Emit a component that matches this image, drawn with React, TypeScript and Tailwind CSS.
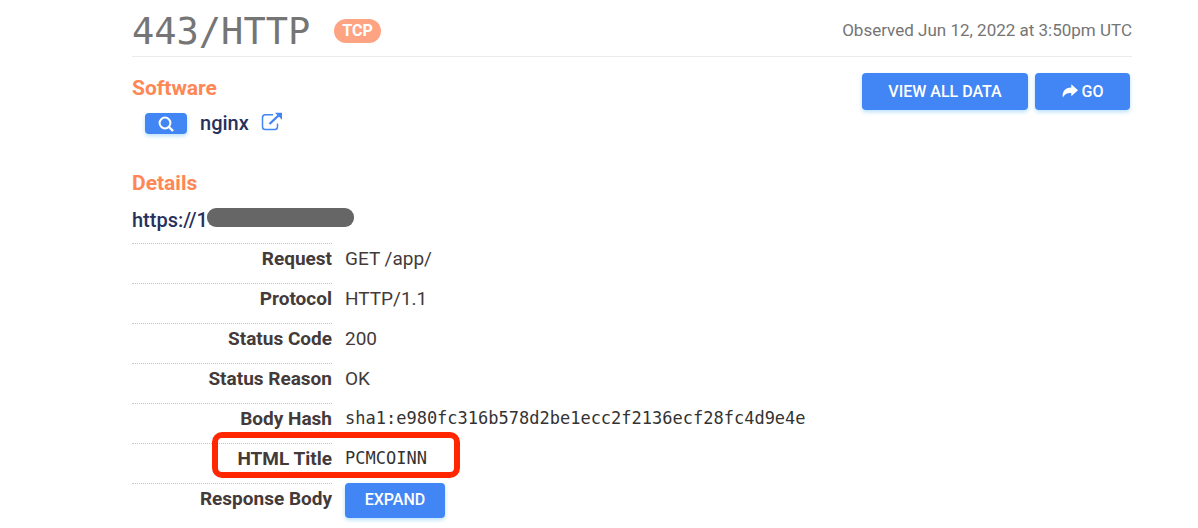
import type { ReactNode } from "react";

const buttonStyle =
  "rounded-[4px] bg-[#4285f4] text-white shadow-[0_2px_4px_#b8e0fa] hover:bg-[#3478ea]";

function SectionTitle({ children }: { children: ReactNode }) {
  return <h3 className="text-[21px] leading-[30px] font-bold text-[#ff8655]">{children}</h3>;
}

function Row({
  label,
  children,
  marked = false,
}: {
  label: string;
  children: ReactNode;
  marked?: boolean;
}) {
  return (
    <div className="relative flex h-10 items-start text-[19px]">
      <dt className="h-full w-[200px] shrink-0 border-t border-dotted border-[#c4c4c4] text-right leading-[30px] font-bold text-[#443a3a]">
        {label}
      </dt>
      <dd className="pl-[13px] leading-8 text-[#443a3a]">{children}</dd>
      {marked && (
        <span className="pointer-events-none absolute -top-[11px] left-20 h-[46px] w-[248px] rounded-[10px] border-[6px] border-[#ff2600]" />
      )}
    </div>
  );
}

function Mono({ children }: { children: ReactNode }) {
  return (
    <code className="block font-['DejaVu_Sans_Mono',monospace] text-[17px] leading-[30px] text-[#333]">
      {children}
    </code>
  );
}

export default function App() {
  return (
    <main className="bg-white pr-[66px] pl-[132px] font-['Roboto',sans-serif]">
      <header className="flex h-[57px] items-center justify-between border-b border-[#ebebeb] pt-1.5">
        <div className="flex items-center gap-6">
          <h2 className="pt-0.5 font-['DejaVu_Sans_Mono',monospace] text-[37px] leading-10 text-[#757575]">
            443/HTTP
          </h2>
          <span className="h-6 rounded-full bg-[#ffa482] px-2 text-[16px] leading-6 font-bold text-white">
            TCP
          </span>
        </div>
        <p className="text-[17px] text-[#757575]">Observed Jun 12, 2022 at 3:50pm UTC</p>
      </header>

      <section className="flex items-start justify-between pt-4 pr-[2px]">
        <div>
          <SectionTitle>Software</SectionTitle>
          <div className="mt-1 flex h-8 items-center pl-[13px]">
            <button
              type="button"
              aria-label="Search"
              className={`flex h-[21px] w-[42px] items-center justify-center pt-0.5 ${buttonStyle}`}
            >
              <svg viewBox="0 0 16 16" className="h-4 w-4" fill="none" stroke="currentColor">
                <circle cx="7" cy="7" r="5.4" strokeWidth="2" />
                <path d="M11 11l4 4" strokeWidth="2.4" />
              </svg>
            </button>
            <span className="ml-[13px] text-[20px] font-medium text-[#28305c]">nginx</span>
            <a href="#nginx" aria-label="Open nginx" className="ml-3 pb-0.5 text-[#4285f4]">
              <svg viewBox="0 0 22 20" className="h-5 w-[22px]" fill="none" stroke="currentColor">
                <path
                  d="M12 2.8H4.3A2.8 2.8 0 0 0 1.5 5.6v9.2A2.8 2.8 0 0 0 4.3 17.6h9.4a2.8 2.8 0 0 0 2.8-2.8V11.5"
                  strokeWidth="1.5"
                />
                <path d="M8.5 12L17.5 3.5" strokeWidth="2.4" />
                <path d="M14 0.8h7v7z" fill="currentColor" stroke="none" />
              </svg>
            </a>
          </div>
        </div>
        <div className="flex gap-[7px]">
          <button type="button" className={`h-[37px] w-[166px] text-[16px] font-medium ${buttonStyle}`}>
            VIEW ALL DATA
          </button>
          <button
            type="button"
            className={`flex h-[37px] w-[95px] items-center justify-center gap-1 text-[16px] font-medium ${buttonStyle}`}
          >
            <svg viewBox="0 0 16 14" className="mb-0.5 h-[14px] w-4" fill="currentColor">
              <path d="M9.3 0.2L16 6.2L9.3 12.2V8.9C5.3 8.7 2.6 9.8 0.9 13.6C-0.3 7.6 3.3 3.6 9.3 3.5Z" />
            </svg>
            GO
          </button>
        </div>
      </section>

      <section className="pt-[29px]">
        <SectionTitle>Details</SectionTitle>
        <div className="mb-0.5 flex h-[43px] items-center">
          <span className="text-[20px] font-medium text-[#28305c]">https://1</span>
          <span className="-ml-px mb-1 h-[19px] w-[147px] rounded-[9px] bg-[#666]" />
        </div>
        <dl>
          <Row label="Request">GET /app/</Row>
          <Row label="Protocol">HTTP/1.1</Row>
          <Row label="Status Code">200</Row>
          <Row label="Status Reason">OK</Row>
          <Row label="Body Hash">
            <Mono>sha1:e980fc316b578d2be1ecc2f2136ecf28fc4d9e4e</Mono>
          </Row>
          <Row label="HTML Title" marked>
            <Mono>PCMCOINN</Mono>
          </Row>
          <Row label="Response Body">
            <button
              type="button"
              className={`block h-[35px] w-[100px] pb-0.5 text-[16px] leading-8 font-medium ${buttonStyle}`}
            >
              EXPAND
            </button>
          </Row>
        </dl>
      </section>
    </main>
  );
}
